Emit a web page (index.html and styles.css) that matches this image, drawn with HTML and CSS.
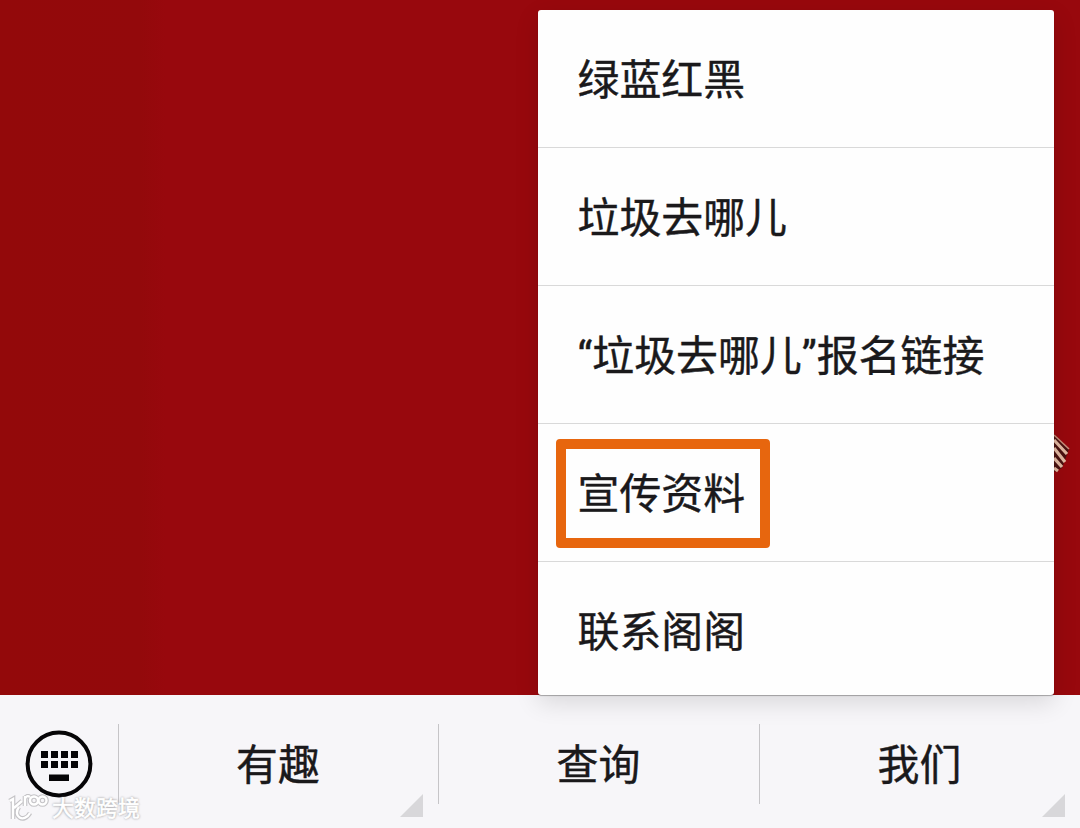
FILE: index.html
```html
<!DOCTYPE html>
<html lang="zh-CN">
<head>
  <meta charset="UTF-8">
  <meta name="viewport" content="width=device-width, initial-scale=1.0">
  <title>宣传资料</title>
  <link rel="stylesheet" href="styles.css">
</head>
<body>

  <div class="screen">
    <div class="content">
      <svg class="stripes" width="18" height="44" viewBox="0 0 18 44">
        <path d="M0 0L15 15L8 34L0 38Z" fill="#4a1210"/>
        <path d="M0 1L15 15" stroke="#c98e7a" stroke-width="1.6"/>
        <path d="M0 6L13 20M0 14L11 28M0 24L8 33M0 34L4 37" stroke="#e3b9a2" stroke-width="3.2"/>
      </svg>
    </div>

    <div class="tabbar">
      <div class="keyboard">
        <svg width="68" height="68" viewBox="0 0 68 68">
          <circle cx="34" cy="34" r="31.4" fill="none" stroke="#060507" stroke-width="4"/>
          <g fill="#060507">
            <rect x="16" y="21" width="7" height="7"/>
            <rect x="26" y="21" width="7" height="7"/>
            <rect x="36" y="21" width="7" height="7"/>
            <rect x="46" y="21" width="7" height="7"/>
            <rect x="16" y="31" width="7" height="7"/>
            <rect x="26" y="31" width="7" height="7"/>
            <rect x="36" y="31" width="7" height="7"/>
            <rect x="46" y="31" width="7" height="7"/>
            <rect x="24" y="44.5" width="20" height="6.5"/>
          </g>
        </svg>
      </div>
      <div class="tab has-menu">有趣</div>
      <div class="tab">查询</div>
      <div class="tab has-menu">我们</div>
    </div>

    <ul class="menu">
      <li>绿蓝红黑</li>
      <li>垃圾去哪儿</li>
      <li>“垃圾去哪儿”报名链接</li>
      <li class="active">宣传资料</li>
      <li>联系阁阁</li>
    </ul>

    <div class="watermark">
      <svg width="42" height="30" viewBox="0 0 42 30">
        <g class="mark-edge">
          <path d="M2.5 7L6 5V25M15 7L7 14M12 13C5 22 17 30 23 19"/>
          <path d="M18 12V2M18 5C18.500 2 21 1.500 23 3"/>
          <circle cx="27" cy="6.500" r="4"/>
          <circle cx="35.500" cy="6.500" r="4"/>
        </g>
        <g class="mark-line">
          <path d="M2.5 7L6 5V25M15 7L7 14M12 13C5 22 17 30 23 19"/>
          <path d="M18 12V2M18 5C18.500 2 21 1.500 23 3"/>
          <circle cx="27" cy="6.500" r="4"/>
          <circle cx="35.500" cy="6.500" r="4"/>
        </g>
      </svg>
      <span>大数跨境</span>
    </div>
  </div>

</body>
</html>
```

FILE: styles.css
```css
* {
  margin: 0;
  padding: 0;
  box-sizing: border-box;
}

body {
  font-family: Roboto, "Noto Sans CJK SC", sans-serif;
  font-size: 41.9px;
  color: #1a191b;
  -webkit-text-stroke: 0.4px #1a191b;
}

.screen {
  position: relative;
  display: flex;
  flex-direction: column;
  width: 1080px;
  height: 828px;
  overflow: hidden;
}

.content {
  position: relative;
  flex: 1;
  background: linear-gradient(to right, #93090a 0, #93090b 140px, #98080d 165px, #98080d 100%);
}

.stripes {
  position: absolute;
  left: 1054px;
  top: 434px;
}

/* bottom bar */
.tabbar {
  display: flex;
  height: 133px;
  background: #f7f6f9;
}

.keyboard {
  width: 118px;
  padding: 35px 0 0 25px;
}

.tab {
  position: relative;
  width: 321px;
  height: 133px;
  line-height: 60px;
  padding-top: 41px;
  text-align: center;
}

.tab:nth-child(2) {
  width: 320px;
}

.tab::before {
  content: "";
  position: absolute;
  left: 0;
  top: 29px;
  width: 1px;
  height: 80px;
  background: #c6c5c8;
}

.has-menu::after {
  content: "";
  position: absolute;
  right: 15px;
  bottom: 11px;
  border-left: 23px solid transparent;
  border-bottom: 23px solid #d8d7da;
}

/* popup menu */
.menu {
  position: absolute;
  left: 538px;
  top: 10px;
  width: 516px;
  height: 685px;
  list-style: none;
  background: #fefefe;
  border-radius: 3px;
  box-shadow: 0 8px 24px rgba(0, 0, 0, 0.12), 0 1px 1px rgba(0, 0, 0, 0.3);
}

.menu li {
  position: relative;
  height: 138px;
  line-height: 60px;
  padding: 41px 0 0 39.5px;
  border-bottom: 1px solid #d9d9d9;
  white-space: nowrap;
}

.menu li:last-child {
  height: 133px;
  border-bottom: none;
}

.menu .active::after {
  content: "";
  position: absolute;
  left: 18px;
  top: 15px;
  width: 214px;
  height: 109px;
  box-sizing: border-box;
  border: 10px solid #e7660e;
  border-radius: 4px;
}

.watermark {
  position: absolute;
  left: 7px;
  top: 794px;
  display: flex;
  align-items: center;
  gap: 3px;
  color: #fff;
  font-size: 22px;
  line-height: 30px;
  text-shadow: 0 0 2px #929194, 0 0 3px #aaa9ac;
  -webkit-text-stroke: 0.6px #fff;
}

.mark-edge,
.mark-line {
  fill: none;
  stroke: #c4c3c6;
  stroke-width: 4.6;
}

.mark-line {
  stroke: #fff;
  stroke-width: 2.4;
}
```
